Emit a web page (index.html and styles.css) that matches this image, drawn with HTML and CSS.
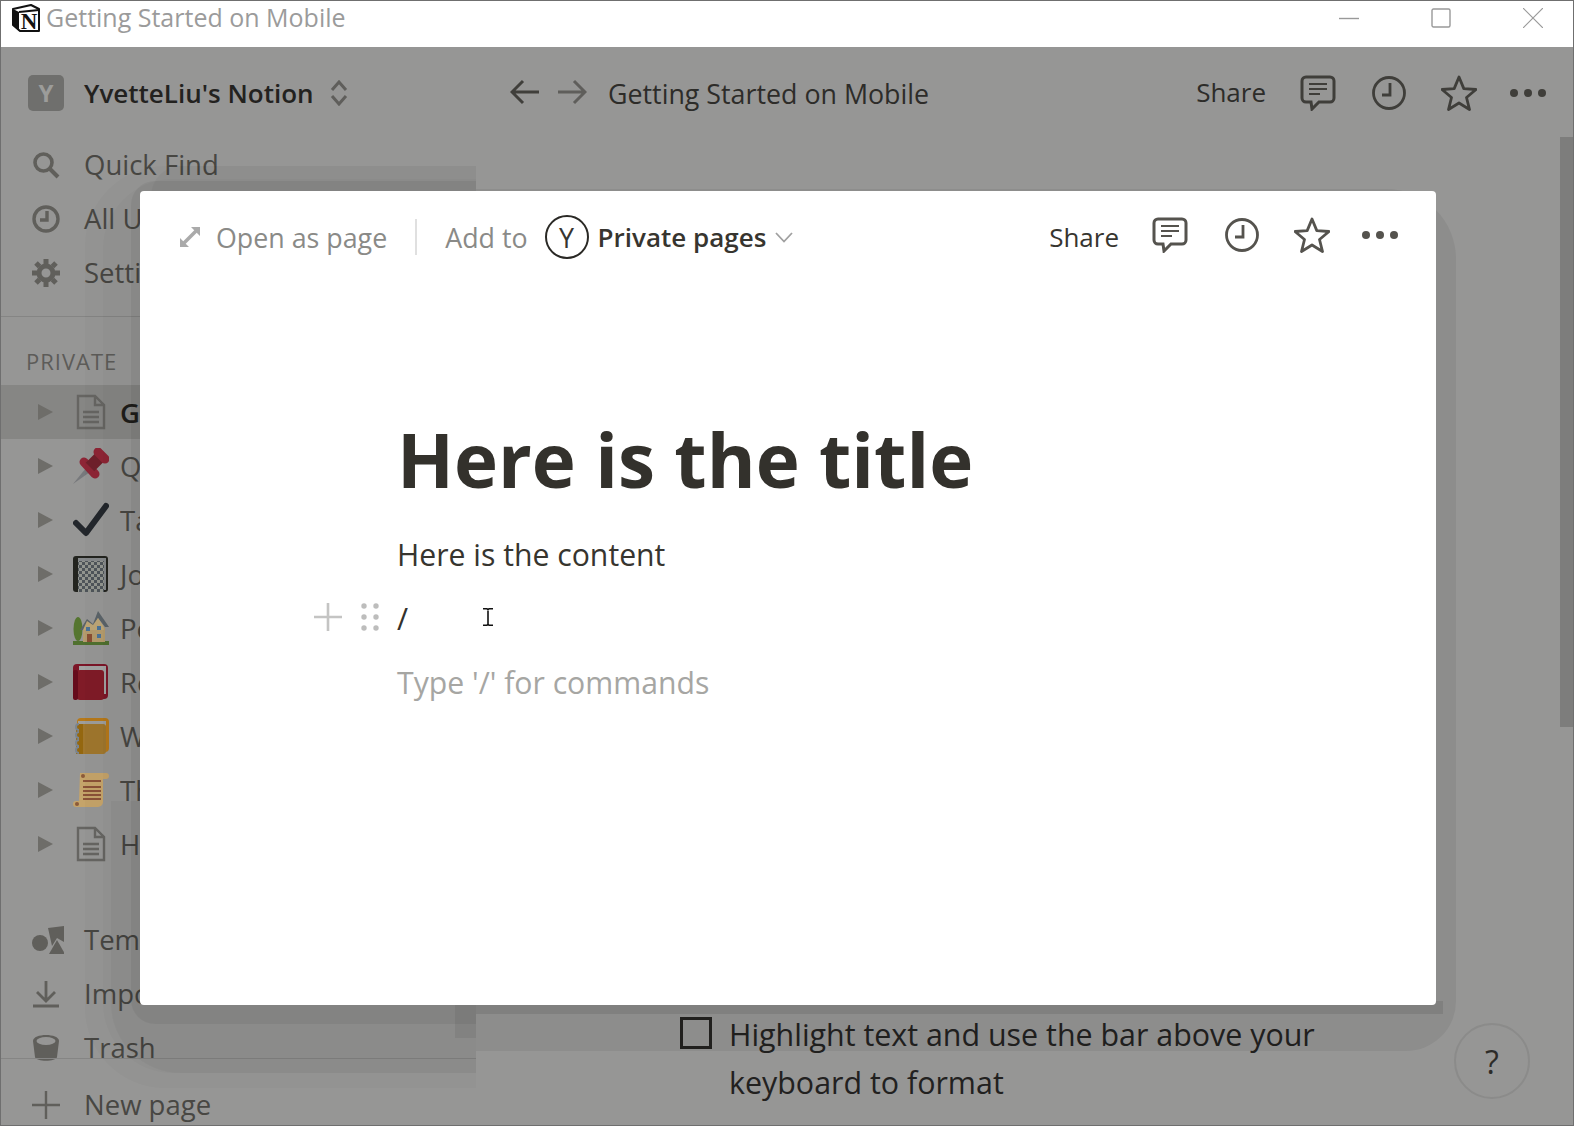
FILE: index.html
```html
<!DOCTYPE html>
<html>
<head>
    <meta charset="utf-8">
    <title>Getting Started on Mobile</title>
    <link rel="stylesheet" href="styles.css">
</head>
<body>
<div class="window">
    <div class="titlebar">
        <svg class="app-logo" viewBox="0 0 28 28">
            <path d="M1 5 L19 1 L27 5 L27 27 L8 27 L1 21 Z" fill="#fff" stroke="#111" stroke-width="2" stroke-linejoin="round"/>
            <path d="M1 5 L7 8 L7 27 L1 21 Z" fill="#111"/>
            <path d="M7 8 L27 6" stroke="#111" stroke-width="2"/>
            <text class="logo-letter" x="17" y="24.500" text-anchor="middle">N</text>
        </svg>
        <span class="window-title">Getting Started on Mobile</span>
        <div class="window-controls">
            <svg viewBox="0 0 20 20"><path d="M0 10.500 H20" stroke="#999" stroke-width="1.400"/></svg>
            <svg viewBox="0 0 20 20"><rect x="1" y="1" width="18" height="18" rx="1.500" fill="none" stroke="#999" stroke-width="1.400"/></svg>
            <svg viewBox="0 0 20 20"><path d="M0 0 L20 20 M20 0 L0 20" stroke="#999" stroke-width="1.200"/></svg>
        </div>
    </div>

    <div class="app">
        <aside class="sidebar">
            <div class="workspace">
                <span class="workspace-badge">Y</span>
                <span class="workspace-name">YvetteLiu's Notion</span>
                <svg class="updown" viewBox="0 0 18 26"><path d="M2 10 L9 2 L16 10 M2 16 L9 24 L16 16" fill="none" stroke="#5f5e5b" stroke-width="3"/></svg>
            </div>

            <div class="nav-item">
                <svg class="nav-icon" viewBox="0 0 28 28"><circle cx="11.500" cy="11.500" r="8.500" fill="none" stroke="#605f5b" stroke-width="3.600"/><path d="M17.500 17.500 L26 26" stroke="#605f5b" stroke-width="4"/></svg>
                <span>Quick Find</span>
            </div>
            <div class="nav-item">
                <svg class="nav-icon" viewBox="0 0 28 28"><circle cx="14" cy="14" r="12" fill="none" stroke="#605f5b" stroke-width="3.400"/><path d="M15 6 V15 H8" fill="none" stroke="#605f5b" stroke-width="3.400"/></svg>
                <span>All Updates</span>
            </div>
            <div class="nav-item">
                <svg class="nav-icon" viewBox="0 0 28 28"><circle cx="14" cy="14" r="7" fill="none" stroke="#605f5b" stroke-width="5"/><path d="M14 0 V5 M14 23 V28 M0 14 H5 M23 14 H28 M4 4 L7.500 7.500 M20.500 20.500 L24 24 M24 4 L20.500 7.500 M7.500 20.500 L4 24" stroke="#605f5b" stroke-width="5"/></svg>
                <span>Settings</span>
            </div>

            <div class="sidebar-divider"></div>
            <div class="section-label">PRIVATE</div>

            <div class="page-row active">
                <i class="arrow"></i>
                <svg class="page-icon" viewBox="0 0 36 36"><path d="M5 2 H22 L31 11 V34 H5 Z M22 2 V11 H31 M10 18 H26 M10 23 H26 M10 28 H26" fill="none" stroke="#666562" stroke-width="2.400"/></svg>
                <span>Getting Started</span>
            </div>
            <div class="page-row">
                <i class="arrow"></i>
                <svg class="page-icon" viewBox="0 0 36 36">
                    <path d="M0 36 L13 20 L17 24 Z" fill="#77797c"/>
                    <path d="M11 14 L22 26" stroke="#8e2536" stroke-width="9" stroke-linecap="round"/>
                    <path d="M28 8 L17 19" stroke="#70202b" stroke-width="12"/>
                    <path d="M25 4 L32 11" stroke="#8e2536" stroke-width="9" stroke-linecap="round"/>
                </svg>
                <span>Quick Note</span>
            </div>
            <div class="page-row">
                <i class="arrow"></i>
                <svg class="page-icon" viewBox="0 0 36 36"><path d="M3 21 L13 31 L33 4" fill="none" stroke="#23272c" stroke-width="6" stroke-linecap="round" stroke-linejoin="round"/></svg>
                <span>Task List</span>
            </div>
            <div class="page-row">
                <i class="arrow"></i>
                <svg class="page-icon" viewBox="0 0 36 36">
                    <defs><pattern id="check" width="6" height="6" patternUnits="userSpaceOnUse"><rect width="6" height="6" fill="#4f555a"/><rect width="3" height="3" fill="#92958f"/><rect x="3" y="3" width="3" height="3" fill="#92958f"/></pattern></defs>
                    <rect x="0" y="0" width="35" height="36" rx="3" fill="#23241f"/><rect x="5" y="2" width="28" height="32" fill="#85888a"/><rect x="5" y="5" width="26" height="31" fill="url(#check)"/>
                </svg>
                <span>Journal</span>
            </div>
            <div class="page-row">
                <i class="arrow"></i>
                <svg class="page-icon" viewBox="0 0 36 36">
                    <rect x="0" y="31" width="36" height="4" fill="#50712f"/><ellipse cx="5" cy="19" rx="4.500" ry="12" fill="#55752f"/>
                    <rect x="10" y="18" width="22" height="14" fill="#b59c6d"/><path d="M7 20 L14 9 L20 14 L25 1 L36 17 L32 17 L25 8 L19 20 Z" fill="#5b6369"/><path d="M14 11 L20 15 L25 8 L31 17 V20 H10 Z" fill="#bda677"/>
                    <rect x="14" y="24" width="5" height="8" fill="#8a4f33"/><rect x="13" y="17" width="4" height="4" fill="#4b7397"/><rect x="24" y="16" width="4" height="4" fill="#4b7397"/><rect x="24" y="24" width="4" height="4" fill="#4b7397"/>
                </svg>
                <span>Personal Home</span>
            </div>
            <div class="page-row">
                <i class="arrow"></i>
                <svg class="page-icon" viewBox="0 0 36 36"><rect x="0" y="0" width="35" height="35" rx="4" fill="#7c1628"/><rect x="6" y="2" width="27" height="28" fill="#a3a3a3"/><rect x="4" y="6" width="27" height="30" rx="3" fill="#801b27"/><rect x="0" y="6" width="5" height="30" rx="2" fill="#660c1c"/></svg>
                <span>Reading List</span>
            </div>
            <div class="page-row">
                <i class="arrow"></i>
                <svg class="page-icon" viewBox="0 0 36 36"><rect x="4" y="0" width="32" height="34" rx="4" fill="#b6791a"/><rect x="5" y="3" width="28" height="28" fill="#9e9e9c"/><rect x="3" y="6" width="30" height="30" rx="3" fill="#a0772d"/><rect x="3" y="6" width="7" height="30" fill="#94670f"/><path d="M6 6 a3 3 0 1 0 0 6 M6 14 a3 3 0 1 0 0 6 M6 22 a3 3 0 1 0 0 6 M6 29 a3 3 0 1 0 0 6" fill="none" stroke="#7b8590" stroke-width="2"/></svg>
                <span>Weekly Agenda</span>
            </div>
            <div class="page-row">
                <i class="arrow"></i>
                <svg class="page-icon" viewBox="0 0 36 36"><path d="M7 1 H33 a3 3 0 0 1 0 6 H30 V30 a5 5 0 0 1 -5 5 H3 a3 3 0 0 1 0 -6 H6 Z" fill="#c5a46a"/><circle cx="10" cy="4" r="2" fill="#8c5a39"/><circle cx="4" cy="32" r="2" fill="#8c5a39"/><path d="M10 9 H28 M10 15 H28 M10 19 H28 M10 23 H28 M10 27 H28" stroke="#8b5238" stroke-width="1.800"/></svg>
                <span>The Library</span>
            </div>
            <div class="page-row">
                <i class="arrow"></i>
                <svg class="page-icon" viewBox="0 0 36 36"><path d="M5 2 H22 L31 11 V34 H5 Z M22 2 V11 H31 M10 18 H26 M10 23 H26 M10 28 H26" fill="none" stroke="#666562" stroke-width="2.400"/></svg>
                <span>Home Notes</span>
            </div>

            <div class="nav-item tools-start">
                <svg class="nav-icon wide" viewBox="0 0 32 28"><path d="M16 2 L32 0 L32 16 L25 12 L20 20 Z" fill="#605f5b"/><circle cx="8" cy="17" r="8" fill="#605f5b"/><path d="M25 14 L33 28 H17 Z" fill="#605f5b"/></svg>
                <span>Templates</span>
            </div>
            <div class="nav-item">
                <svg class="nav-icon" viewBox="0 0 28 28"><path d="M14 1 V20 M5 12 L14 21 L23 12" fill="none" stroke="#605f5b" stroke-width="2.800"/><path d="M1 26 H27" stroke="#605f5b" stroke-width="3"/></svg>
                <span>Import</span>
            </div>
            <div class="nav-item trash">
                <svg class="nav-icon" viewBox="0 0 28 28"><path d="M1 7 C1 -1 27 -1 27 7 L25 23 C24 28 4 28 3 23 Z" fill="#605f5b"/><ellipse cx="14" cy="7" rx="9.500" ry="4" fill="#969695"/></svg>
                <span>Trash</span>
            </div>
            <div class="nav-item new-page">
                <svg class="nav-icon" viewBox="0 0 28 28"><path d="M14 0 V28 M0 14 H28" stroke="#605f5b" stroke-width="2.400"/></svg>
                <span>New page</span>
            </div>
        </aside>

        <main class="main">
            <div class="topbar">
                <div class="crumbs">
                    <svg class="nav-arrow" viewBox="0 0 30 26"><path d="M29 13 H3 M13 2 L2 13 L13 24" fill="none" stroke="#403f3b" stroke-width="3"/></svg>
                    <svg class="nav-arrow next" viewBox="0 0 30 26"><path d="M1 13 H27 M17 2 L28 13 L17 24" fill="none" stroke="#5f5e5b" stroke-width="3"/></svg>
                    <span class="crumb-title">Getting Started on Mobile</span>
                </div>
                <div class="actions">
                    <span class="share">Share</span>
                    <svg class="act-comment" viewBox="0 0 36 36"><path d="M6 2 H30 a4 4 0 0 1 4 4 V23 a4 4 0 0 1 -4 4 H19 L12 34 L11 27 H6 a4 4 0 0 1 -4 -4 V6 a4 4 0 0 1 4 -4 Z" fill="none" stroke="#3f3e3a" stroke-width="3"/><path d="M9 9 H27 M9 14 H27 M9 19 H20" stroke="#3f3e3a" stroke-width="2"/></svg>
                    <svg class="act-clock" viewBox="0 0 34 34"><circle cx="17" cy="17" r="15.500" fill="none" stroke="#3f3e3a" stroke-width="2.800"/><path d="M18 7 V19 H10" fill="none" stroke="#3f3e3a" stroke-width="2.800"/></svg>
                    <svg class="act-star" viewBox="0 0 36 36"><path d="M18 2 L22.800 13.600 L35 14.500 L25.500 22.500 L28.500 34.500 L18 28 L7.500 34.500 L10.500 22.500 L1 14.500 L13.200 13.600 Z" fill="none" stroke="#3f3e3a" stroke-width="2.800" stroke-linejoin="round"/></svg>
                    <svg class="act-dots" viewBox="0 0 36 8"><circle cx="4" cy="4" r="4" fill="#3f3e3a"/><circle cx="18" cy="4" r="4" fill="#3f3e3a"/><circle cx="32" cy="4" r="4" fill="#3f3e3a"/></svg>
                </div>
            </div>
            <div class="page-body">
                <div class="todo">
                    <span class="checkbox"></span>
                    <p>Highlight text and use the bar above your keyboard to format</p>
                </div>
            </div>
            <div class="scroll-thumb"></div>
        </main>
    </div>

    <!-- banded shadow round the peek window -->
    <div class="shade-side">
        <div class="band band-outer"></div>
        <div class="band band-mid"></div>
        <div class="band band-over"></div>
        <div class="band band-under"></div>
        <div class="band band-inner"></div>
        <div class="band band-edge"></div>
    </div>
    <div class="shade-main"></div>
    <div class="shade-bottom"></div>

    <div class="help">?</div>

    <section class="peek">
        <header class="peek-head">
            <svg class="expand" viewBox="0 0 22 22"><path d="M21 1 L12 1 L21 10 Z M1 21 L10 21 L1 12 Z" fill="#aaa"/><path d="M17 5 L5 17" stroke="#aaa" stroke-width="3.600"/></svg>
            <span class="open-page">Open as page</span>
            <span class="head-sep"></span>
            <span class="add-to">Add to</span>
            <span class="avatar">Y</span>
            <span class="location">Private pages</span>
            <svg class="chevron" viewBox="0 0 18 11"><path d="M1 1 L9 9.500 L17 1" fill="none" stroke="#a0a0a0" stroke-width="1.800"/></svg>
            <div class="actions peek-actions">
                <span class="share">Share</span>
                <svg class="act-comment" viewBox="0 0 36 36"><path d="M6 2 H30 a4 4 0 0 1 4 4 V23 a4 4 0 0 1 -4 4 H19 L12 34 L11 27 H6 a4 4 0 0 1 -4 -4 V6 a4 4 0 0 1 4 -4 Z" fill="none" stroke="#55534e" stroke-width="3"/><path d="M9 9 H27 M9 14 H27 M9 19 H20" stroke="#55534e" stroke-width="2"/></svg>
                <svg class="act-clock" viewBox="0 0 34 34"><circle cx="17" cy="17" r="15.500" fill="none" stroke="#55534e" stroke-width="2.800"/><path d="M18 7 V19 H10" fill="none" stroke="#55534e" stroke-width="2.800"/></svg>
                <svg class="act-star" viewBox="0 0 36 36"><path d="M18 2 L22.800 13.600 L35 14.500 L25.500 22.500 L28.500 34.500 L18 28 L7.500 34.500 L10.500 22.500 L1 14.500 L13.200 13.600 Z" fill="none" stroke="#55534e" stroke-width="2.800" stroke-linejoin="round"/></svg>
                <svg class="act-dots" viewBox="0 0 36 8"><circle cx="4" cy="4" r="4" fill="#55534e"/><circle cx="18" cy="4" r="4" fill="#55534e"/><circle cx="32" cy="4" r="4" fill="#55534e"/></svg>
            </div>
        </header>
        <div class="peek-body">
            <h1>Here is the title</h1>
            <p class="block">Here is the content</p>
            <div class="block slash">
                <div class="handles">
                    <svg class="plus" viewBox="0 0 28 28"><path d="M14 0 V28 M0 14 H28" stroke="#c4c4c3" stroke-width="2.600"/></svg>
                    <svg class="grip" viewBox="0 0 18 28"><circle cx="3" cy="3" r="2.700"/><circle cx="15" cy="3" r="2.700"/><circle cx="3" cy="14" r="2.700"/><circle cx="15" cy="14" r="2.700"/><circle cx="3" cy="25" r="2.700"/><circle cx="15" cy="25" r="2.700"/></svg>
                </div>
                /
                <svg class="ibeam" viewBox="0 0 10 18"><path d="M0 0.800 H4 L5 1.800 L6 0.800 H10 M5 1.800 V16.200 M0 17.200 H4 L5 16.200 L6 17.200 H10" fill="none" stroke="#111" stroke-width="1.600"/></svg>
            </div>
            <p class="block placeholder">Type '/' for commands</p>
        </div>
    </section>
</div>
</body>
</html>
```

FILE: styles.css
```css
* {
    box-sizing: border-box;
}
body {
    margin: 0;
    font-family: "Open Sans", "Noto Sans", sans-serif;
    background-color: #969695;
}
svg {
    display: block;
    flex: none;
}
.window {
    position: relative;
    display: flex;
    flex-direction: column;
    width: 1574px;
    height: 1126px;
    border: 1px solid #6f6f6f;
    overflow: hidden;
}

/* title bar */
.titlebar {
    display: flex;
    align-items: center;
    height: 46px;
    padding: 0 30px 13px 11px;
    background-color: #fff;
    flex: none;
}
.app-logo {
    width: 28px;
    height: 28px;
    margin-right: 6px;
}
.logo-letter {
    font-family: "Liberation Serif", serif;
    font-size: 23px;
    font-weight: 700;
    fill: #111;
}
.window-title {
    margin-top: -2px;
    font-size: 25px;
    color: #9b9b9b;
}
.window-controls {
    display: flex;
    gap: 72px;
    margin-left: auto;
}
.window-controls svg {
    width: 20px;
    height: 20px;
}

/* app behind the peek */
.app {
    display: flex;
    flex: 1;
    min-height: 0;
    background-color: #969695;
}
.sidebar {
    display: flex;
    flex-direction: column;
    width: 475px;
    flex: none;
    color: #484743;
    font-size: 27.500px;
    white-space: nowrap;
}
.workspace {
    display: flex;
    align-items: center;
    height: 91px;
    padding-left: 27px;
    flex: none;
}
.workspace-badge {
    display: flex;
    align-items: center;
    justify-content: center;
    width: 36px;
    height: 36px;
    margin-right: 20px;
    border-radius: 5px;
    background-color: #6f6f6d;
    color: #9c9c9a;
    font-size: 24px;
    font-weight: 700;
}
.workspace-name {
    font-size: 26px;
    font-weight: 600;
    color: #23221f;
}
.updown {
    width: 18px;
    height: 26px;
    margin-left: 16px;
}
.nav-item {
    display: flex;
    align-items: center;
    height: 54px;
    padding-left: 31px;
    flex: none;
}
.nav-item span {
    margin-top: -2px;
}
.nav-icon {
    width: 28px;
    height: 28px;
    margin-right: 24px;
}
.nav-icon.wide {
    width: 32px;
    margin-right: 20px;
}
.sidebar-divider {
    height: 1px;
    margin-top: 16px;
    background-color: #858584;
    flex: none;
}
.section-label {
    height: 68px;
    padding: 27px 0 0 25px;
    font-size: 22px;
    letter-spacing: 1px;
    line-height: 34px;
    color: #5d5c59;
    flex: none;
}
.page-row {
    display: flex;
    align-items: center;
    height: 54px;
    padding-left: 37px;
    flex: none;
}
.page-row.active {
    background-color: #868684;
    color: #1f1e1b;
    font-weight: 600;
}
.arrow {
    width: 0;
    height: 0;
    margin-right: 20px;
    border-style: solid;
    border-width: 8.500px 0 8.500px 15px;
    border-color: transparent transparent transparent #6e6d69;
}
.page-icon {
    width: 36px;
    height: 36px;
    margin-right: 11px;
}
.tools-start {
    margin-top: 42px;
}
.trash {
    position: relative;
}
.trash::after {
    content: "";
    position: absolute;
    left: 0;
    right: 0;
    bottom: 16px;
    height: 1px;
    background-color: #858584;
}
.new-page {
    margin-top: 3px;
}

/* main area */
.main {
    position: relative;
    display: flex;
    flex-direction: column;
    flex: 1;
    min-width: 0;
}
.topbar {
    display: flex;
    align-items: center;
    height: 91px;
    padding: 0 27px 0 34px;
    flex: none;
}
.crumbs {
    display: flex;
    align-items: center;
}
.nav-arrow {
    width: 30px;
    height: 26px;
    position: relative;
    top: -1px;
}
.nav-arrow.next {
    margin-left: 17px;
}
.crumb-title {
    margin: 2px 0 0 21px;
    font-size: 26.800px;
    color: #2d2c29;
}
.actions {
    display: flex;
    align-items: center;
    margin-left: auto;
    color: #2d2c29;
}
.share {
    margin: -2px 34px 0 0;
    font-size: 26px;
}
.act-comment {
    width: 36px;
    height: 36px;
    margin-right: 36px;
}
.act-clock {
    width: 34px;
    height: 34px;
    margin-right: 35px;
}
.act-star {
    width: 36px;
    height: 36px;
    margin-right: 33px;
}
.act-dots {
    width: 36px;
    height: 8px;
}
.page-body {
    display: flex;
    flex-direction: column;
    justify-content: flex-end;
    flex: 1;
    padding: 0 0 18px 204px;
}
.todo {
    display: flex;
    width: 640px;
    color: #22211f;
    font-size: 30.400px;
    line-height: 48px;
}
.todo p {
    margin: 0;
}
.checkbox {
    width: 32px;
    height: 32px;
    margin: 6px 17px 0 0;
    border: 3px solid #242320;
    flex: none;
}
.scroll-thumb {
    position: absolute;
    top: 90px;
    right: 0;
    width: 13px;
    height: 590px;
    background-color: #7d7d7c;
}

/* peek shadow */
.shade-side {
    position: absolute;
    top: 0;
    left: 0;
    width: 475px;
    height: 1124px;
    overflow: hidden;
}
.band {
    position: absolute;
    right: -200px;
}
.band-outer {
    left: 84px;
    top: 165px;
    bottom: 37px;
    border-radius: 80px;
    background-color: rgba(0, 0, 0, 0.018);
}
.band-mid {
    left: 102px;
    top: 178px;
    bottom: 52px;
    border-radius: 70px;
    background-color: rgba(0, 0, 0, 0.018);
}
.band-over {
    left: 150px;
    top: 165px;
    height: 30px;
    border-radius: 30px 0 0 0;
    background-color: rgba(0, 0, 0, 0.03);
}
.band-under {
    left: 110px;
    top: 800px;
    bottom: 52px;
    border-radius: 0 0 0 70px;
    background-color: rgba(0, 0, 0, 0.03);
}
.band-inner {
    left: 130px;
    top: 180px;
    bottom: 101px;
    border-radius: 24px;
    background-color: rgba(0, 0, 0, 0.05);
}
.band-edge {
    left: 454px;
    right: 0;
    top: 1004px;
    height: 33px;
    background-color: rgba(0, 0, 0, 0.06);
}
.shade-main {
    position: absolute;
    left: 475px;
    top: 188px;
    width: 980px;
    height: 862px;
    border-radius: 0 70px 50px 0;
    background-color: rgba(0, 0, 0, 0.06);
}
.shade-bottom {
    position: absolute;
    left: 475px;
    top: 1000px;
    width: 967px;
    height: 13px;
    background-color: rgba(0, 0, 0, 0.09);
}
.help {
    position: absolute;
    left: 1453px;
    top: 1022px;
    width: 76px;
    height: 76px;
    border: 2px solid #8b8b8a;
    border-radius: 50%;
    text-align: center;
    font-size: 32px;
    line-height: 74px;
    color: #2d2c29;
}

/* peek window */
.peek {
    position: absolute;
    left: 139px;
    top: 190px;
    width: 1296px;
    height: 814px;
    border-radius: 4px;
    background-color: #fff;
    color: #37352f;
}
.peek-head {
    display: flex;
    align-items: center;
    height: 92px;
    padding: 0 38px 0 39px;
    font-size: 26.800px;
}
.expand {
    width: 22px;
    height: 22px;
    margin-right: 15px;
}
.open-page {
    color: #8a8a87;
}
.head-sep {
    width: 2px;
    height: 36px;
    margin: 0 28px;
    background-color: #e0e0e0;
}
.add-to {
    color: #8a8a87;
}
.avatar {
    display: flex;
    align-items: center;
    justify-content: center;
    width: 44px;
    height: 44px;
    margin: 0 9px 0 17px;
    border: 2px solid #2a2925;
    border-radius: 50%;
    color: #37352f;
}
.location {
    font-size: 26px;
    font-weight: 600;
}
.chevron {
    width: 18px;
    height: 11px;
    margin-left: 9px;
}
.peek-actions {
    color: #37352f;
}
.peek-actions svg {
    position: relative;
    top: -2px;
}
.peek-actions .share {
    margin: 0 33px 0 0;
}
.peek-actions .act-comment {
    margin-right: 37px;
}
.peek-actions .act-star {
    margin-right: 32px;
}
.peek-body {
    padding: 133px 0 0 257px;
}
h1 {
    margin: 0;
    font-size: 74.500px;
    line-height: 86px;
    font-weight: 700;
    color: #33312c;
}
.block {
    position: relative;
    margin: 0;
    height: 64px;
    font-size: 30.200px;
    line-height: 64px;
}
.peek-body h1 + .block {
    margin-top: 21px;
}
.slash {
    color: #33312c;
}
.handles {
    position: absolute;
    right: 100%;
    top: 16px;
    display: flex;
    gap: 19px;
    margin-right: 18px;
}
.plus {
    width: 28px;
    height: 28px;
}
.grip {
    width: 18px;
    height: 28px;
    fill: #bdbdbc;
}
.ibeam {
    position: absolute;
    left: 86px;
    top: 21px;
    width: 10px;
    height: 18px;
}
.placeholder {
    color: #a6a6a3;
}
```
